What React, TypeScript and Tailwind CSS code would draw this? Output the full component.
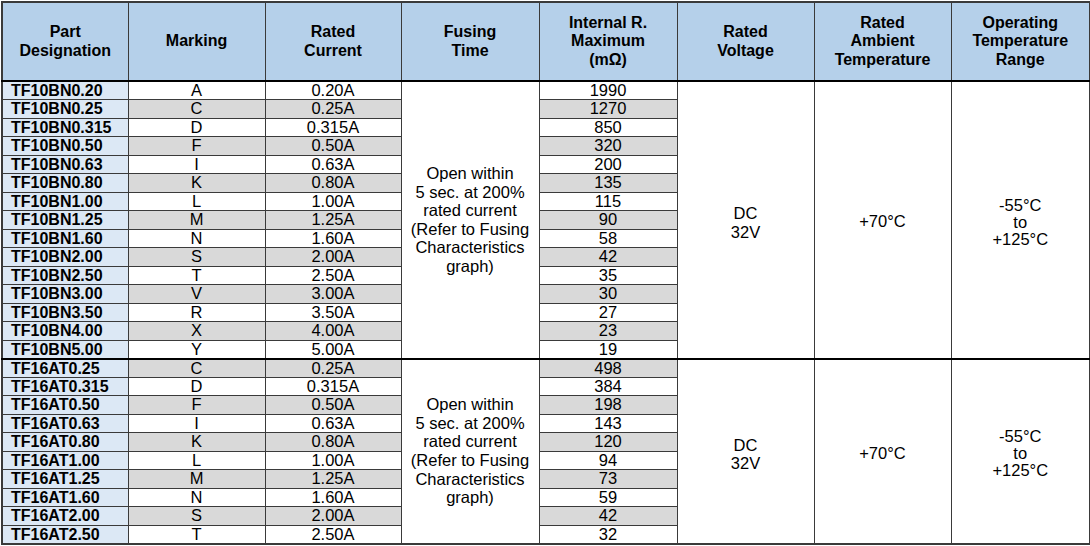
import React from "react";

type Row = { part: string; mark: string; current: string; res: string };

const groupA: Row[] = [
  { part: "TF10BN0.20", mark: "A", current: "0.20A", res: "1990" },
  { part: "TF10BN0.25", mark: "C", current: "0.25A", res: "1270" },
  { part: "TF10BN0.315", mark: "D", current: "0.315A", res: "850" },
  { part: "TF10BN0.50", mark: "F", current: "0.50A", res: "320" },
  { part: "TF10BN0.63", mark: "I", current: "0.63A", res: "200" },
  { part: "TF10BN0.80", mark: "K", current: "0.80A", res: "135" },
  { part: "TF10BN1.00", mark: "L", current: "1.00A", res: "115" },
  { part: "TF10BN1.25", mark: "M", current: "1.25A", res: "90" },
  { part: "TF10BN1.60", mark: "N", current: "1.60A", res: "58" },
  { part: "TF10BN2.00", mark: "S", current: "2.00A", res: "42" },
  { part: "TF10BN2.50", mark: "T", current: "2.50A", res: "35" },
  { part: "TF10BN3.00", mark: "V", current: "3.00A", res: "30" },
  { part: "TF10BN3.50", mark: "R", current: "3.50A", res: "27" },
  { part: "TF10BN4.00", mark: "X", current: "4.00A", res: "23" },
  { part: "TF10BN5.00", mark: "Y", current: "5.00A", res: "19" },
];

const groupB: Row[] = [
  { part: "TF16AT0.25", mark: "C", current: "0.25A", res: "498" },
  { part: "TF16AT0.315", mark: "D", current: "0.315A", res: "384" },
  { part: "TF16AT0.50", mark: "F", current: "0.50A", res: "198" },
  { part: "TF16AT0.63", mark: "I", current: "0.63A", res: "143" },
  { part: "TF16AT0.80", mark: "K", current: "0.80A", res: "120" },
  { part: "TF16AT1.00", mark: "L", current: "1.00A", res: "94" },
  { part: "TF16AT1.25", mark: "M", current: "1.25A", res: "73" },
  { part: "TF16AT1.60", mark: "N", current: "1.60A", res: "59" },
  { part: "TF16AT2.00", mark: "S", current: "2.00A", res: "42" },
  { part: "TF16AT2.50", mark: "T", current: "2.50A", res: "32" },
];

const headers = [
  ["Part", "Designation"],
  ["Marking"],
  ["Rated", "Current"],
  ["Fusing", "Time"],
  ["Internal R.", "Maximum", "(mΩ)"],
  ["Rated", "Voltage"],
  ["Rated", "Ambient", "Temperature"],
  ["Operating", "Temperature", "Range"],
];

const cell = "border border-[#3a3a3a] p-0 text-center align-middle";

function Group({ rows, offset }: { rows: Row[]; offset: number }) {
  return (
    <tbody className="border-t-2 border-t-black">
      {rows.map((r, i) => {
        const grey = (i + offset) % 2 === 1;
        const bg = grey ? "bg-[#d9d9d9]" : "bg-white";
        return (
          <tr key={r.part} className="h-[18.5px] leading-[17px]">
            <td className={`${cell} bg-[#dce8f5] pl-[8px] text-left font-bold text-[16px]`}>{r.part}</td>
            <td className={`${cell} ${bg}`}>{r.mark}</td>
            <td className={`${cell} ${bg}`}>{r.current}</td>
            {i === 0 && (
              <td rowSpan={rows.length} className={`${cell} bg-white leading-[18.6px]`}>
                Open within
                <br />5 sec. at 200%
                <br />rated current
                <br />(Refer to Fusing
                <br />Characteristics
                <br />graph)
              </td>
            )}
            <td className={`${cell} ${bg}`}>{r.res}</td>
            {i === 0 && (
              <>
                <td rowSpan={rows.length} className={`${cell} bg-white pt-[6px] leading-[18.5px]`}>
                  DC
                  <br />
                  32V
                </td>
                <td rowSpan={rows.length} className={`${cell} bg-white pt-[4px]`}>+70°C</td>
                <td rowSpan={rows.length} className={`${cell} bg-white pt-[5px] leading-[17px]`}>
                  -55°C
                  <br />to
                  <br />+125°C
                </td>
              </>
            )}
          </tr>
        );
      })}
    </tbody>
  );
}

export default function App() {
  return (
    <div className="h-[546px] w-[1090px] bg-white pt-[1px] text-black" style={{ fontFamily: '"Liberation Sans", Arial, sans-serif' }}>
      <table className="ml-[1px] w-[1088px] table-fixed border-collapse border-2 border-[#3a3a3a] text-[16.5px]">
        <colgroup>
          <col className="w-[126px]" />
          <col className="w-[137px]" />
          <col className="w-[136px]" />
          <col className="w-[138px]" />
          <col className="w-[138px]" />
          <col className="w-[137px]" />
          <col className="w-[137px]" />
          <col className="w-[139px]" />
        </colgroup>
        <thead>
          <tr className="h-[79px]">
            {headers.map((h, i) => (
              <th key={i} className={`${cell} bg-[#b5d0ea] text-[16px] font-bold leading-[18.5px]`}>
                {h.map((line, j) => (
                  <div key={j}>{line}</div>
                ))}
              </th>
            ))}
          </tr>
        </thead>
        <Group rows={groupA} offset={0} />
        <Group rows={groupB} offset={15} />
      </table>
    </div>
  );
}
